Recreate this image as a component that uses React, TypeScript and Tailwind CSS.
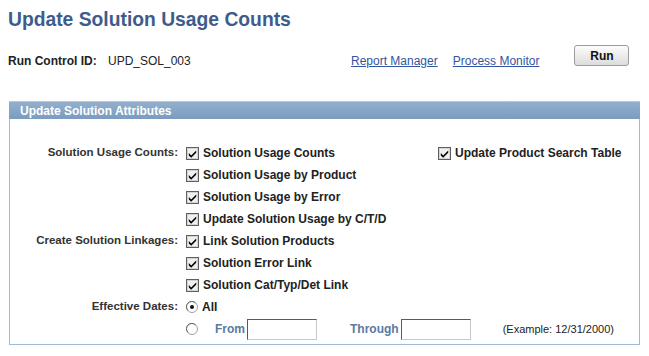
import React from 'react';

const Check = () => (
    <svg width="13" height="13" viewBox="0 0 13 13" className="shrink-0">
        <rect x="0.5" y="0.5" width="12" height="12" fill="#fff" stroke="#5f5f5f" />
        <rect x="1.5" y="1.5" width="10" height="10" fill="#f0f0f0" stroke="#d4d4d4" />
        <path d="M2.8 6 L5.2 8.4 L10.2 3.4 L10.2 5.8 L5.2 10.8 L2.8 8.4 Z" fill="#000" />
    </svg>
);

const Radio = ({ on }: { on?: boolean }) => (
    <svg width="12" height="12" viewBox="0 0 12 12" className="shrink-0">
        <circle cx="6" cy="6" r="5.5" fill="#fff" stroke="#a0a0a0" />
        <path d="M2 9.5 A5 5 0 0 1 9.5 2" fill="none" stroke="#6a6a6a" strokeWidth="1" />
        {on && <circle cx="6" cy="6" r="2" fill="#111" />}
    </svg>
);

const Row = ({ label, children }: { label?: string; children: React.ReactNode }) => (
    <div className="flex items-center h-[22px]">
        <div className="w-[168px] text-right font-bold text-[11.5px] text-[#333]">{label}</div>
        <div className="ml-[8px] flex items-center">{children}</div>
    </div>
);

const Opt = ({ text }: { text: string }) => (
    <div className="flex items-center gap-[4px]">
        <Check />
        <span className="font-bold text-[#222]">{text}</span>
    </div>
);

const DateBox = () => (
    <div className="w-[70px] h-[21px] bg-white border border-t-[#5a5a5a] border-l-[#5a5a5a] border-b-[#c9c9c9] border-r-[#c9c9c9]" />
);

export default function App() {
    return (
        <div className="w-[649px] h-[356px] bg-white font-['Liberation_Sans',Arial,sans-serif] text-[12px] leading-none text-[#222]">
            <h1 className="pl-[8px] pt-[9px] text-[19.3px] leading-[22px] font-bold text-[#3d5c8c]">
                Update Solution Usage Counts
            </h1>
            <div className="mt-[19px] flex items-center h-[22px] pl-[8px]">
                <span className="w-[100px] font-bold text-[#222]">Run Control ID:</span>
                <span className="w-[243px]">UPD_SOL_003</span>
                <a className="text-[#3355a0] underline">Report Manager</a>
                <a className="ml-[15px] text-[#3355a0] underline">Process Monitor</a>
                <button className="ml-[35px] -mt-[11px] w-[55px] h-[21px] rounded-[3px] border border-[#9c9c9c] bg-gradient-to-b from-[#fdfdfd] to-[#dcdcdc] font-bold text-[#111]">
                    Run
                </button>
            </div>
            <div className="ml-[9px] mt-[29px] w-[631px] border border-t-0 border-[#a3bad3]">
                <div className="h-[18px] -mx-px bg-gradient-to-b from-[#93afcd] to-[#7b9cbf] border-t border-[#b9c6d4] rounded-tr-[2px] flex items-center pl-[11px] font-bold text-white">
                    Update Solution Attributes
                </div>
                <div className="pt-[23px] pb-[4px]">
                    <Row label="Solution Usage Counts:">
                        <div className="w-[252px]"><Opt text="Solution Usage Counts" /></div>
                        <Opt text="Update Product Search Table" />
                    </Row>
                    <Row><Opt text="Solution Usage by Product" /></Row>
                    <Row><Opt text="Solution Usage by Error" /></Row>
                    <Row><Opt text="Update Solution Usage by C/T/D" /></Row>
                    <Row label="Create Solution Linkages:"><Opt text="Link Solution Products" /></Row>
                    <Row><Opt text="Solution Error Link" /></Row>
                    <Row><Opt text="Solution Cat/Typ/Det Link" /></Row>
                    <Row label="Effective Dates:">
                        <div className="flex items-center gap-[4px]">
                            <Radio on />
                            <span className="font-bold text-[#222]">All</span>
                        </div>
                    </Row>
                    <Row>
                        <Radio />
                        <span className="ml-[17px] mr-[2px] font-bold text-[#5b7aa0]">From</span>
                        <DateBox />
                        <span className="ml-[33px] mr-[2px] font-bold text-[#5b7aa0]">Through</span>
                        <DateBox />
                        <span className="ml-[32px] text-[11px] text-[#222]">(Example: 12/31/2000)</span>
                    </Row>
                </div>
            </div>
        </div>
    );
}
